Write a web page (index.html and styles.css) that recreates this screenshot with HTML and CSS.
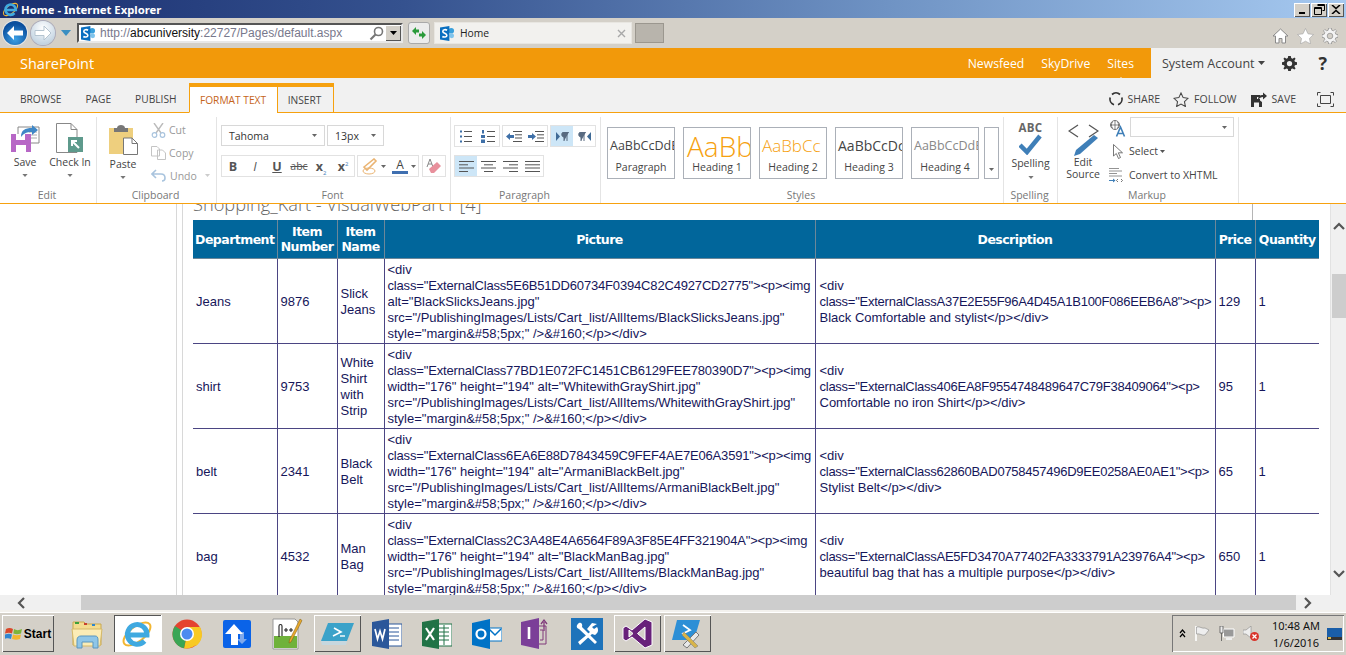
FILE: index.html
```html
<!DOCTYPE html>
<html lang="en">
<head>
<meta charset="utf-8">
<title>Home - Internet Explorer</title>
<link rel="stylesheet" href="styles.css">
</head>
<body>
<svg class="defs" width="0" height="0" aria-hidden="true">
  <symbol id="ie" viewBox="0 0 32 32">
    <ellipse cx="16" cy="16" rx="16" ry="7.5" transform="rotate(-38 16 16)" fill="none" stroke="#f2b632" stroke-width="2"/>
    <path d="M6.5 17H26A9.8 9.8 0 1 0 23.5 23" fill="none" stroke="#3fa9e0" stroke-width="5"/>
  </symbol>
  <symbol id="sp" viewBox="0 0 16 16">
    <circle cx="12" cy="5" r="3" fill="#39a0dc"/><circle cx="12.500" cy="10.500" r="2.500" fill="#7fc4ec"/>
    <path d="M0 1.500 10 0V16L0 14.500Z" fill="#0a6fc0"/>
    <path d="M7.500 4.500C6 3.500 3 3.700 3 5.800 3 8 7.300 7.600 7.300 10 7.300 12 4 12.200 2.500 11.200" fill="none" stroke="#fff" stroke-width="1.700"/>
  </symbol>
  <symbol id="caret" viewBox="0 0 7 4"><path d="M0 0H7L3.500 4Z" fill="#777"/></symbol>
  <symbol id="gear" viewBox="0 0 16 16">
    <path d="M6.600 0H9.400L9.800 2.200 11.300 2.800 13.200 1.500 14.500 2.800 13.200 4.700 13.800 6.200 16 6.600V9.400L13.800 9.800 13.200 11.300 14.500 13.200 13.200 14.500 11.300 13.200 9.800 13.800 9.400 16H6.600L6.200 13.800 4.700 13.200 2.800 14.500 1.500 13.200 2.800 11.300 2.200 9.800 0 9.400V6.600L2.200 6.200 2.800 4.700 1.500 2.800 2.800 1.500 4.700 2.800 6.200 2.200Z"/>
    <circle cx="8" cy="8" r="2.800" fill="var(--hole,#f1f1f1)"/>
  </symbol>
</svg>

<header class="titlebar">
  <svg class="ti-logo"><use href="#ie"/></svg>
  <span class="ti-text">Home - Internet Explorer</span>
  <div class="win-btns">
    <span class="win-btn"><svg width="9" height="9" viewBox="0 0 9 9"><path d="M1 7h6v2H1z"/></svg></span>
    <span class="win-btn"><svg width="11" height="11" viewBox="0 0 11 11"><path d="M3.500.5h7v6h-2M.5 3.500h7v7h-7zM.5 4.500h7M3.500 1.500h7" fill="none" stroke="#000"/></svg></span>
    <span class="win-btn win-close"><svg width="10" height="9" viewBox="0 0 10 9"><path d="M1 0 5 3.500 9 0M1 9 5 5.500 9 9" fill="none" stroke="#000" stroke-width="1.600"/></svg></span>
  </div>
</header>

<nav class="toolbar">
  <span class="nav-round nav-back"><svg width="18" height="16" viewBox="0 0 18 16"><path d="M8 1 1 8l7 7V10.500h9v-5H8Z" fill="#fff"/></svg></span>
  <span class="nav-round nav-fwd"><svg width="18" height="16" viewBox="0 0 18 16"><path d="M10 1l7 7-7 7V10.500H1v-5h9Z" fill="#fff" stroke="#b5c4d0"/></svg></span>
  <svg class="nav-menu" width="10" height="6" viewBox="0 0 10 6"><path d="M0 0H10L5 6Z" fill="#3a8fc2"/></svg>
  <div class="addr">
    <svg class="addr-sp"><use href="#sp"/></svg>
    <span class="addr-url"><span class="dim">http://</span>abcuniversity<span class="dim">:22727/Pages/default.aspx</span></span>
    <svg class="addr-search" width="15" height="15" viewBox="0 0 15 15"><circle cx="9.500" cy="5.500" r="4" fill="none" stroke="#777" stroke-width="1.600"/><path d="M6.500 8.500 1.500 13.500" stroke="#777" stroke-width="2.200"/></svg>
    <span class="addr-drop"><svg width="7" height="4"><path d="M0 0H7L3.500 4Z"/></svg></span>
  </div>
  <span class="refresh"><svg width="16" height="14" viewBox="0 0 16 14"><path d="M1 5 5 1V3.500H8V6.500H5V9ZM15 9l-4 4V10.500H8v-3h3V5Z" fill="#2a9a3a"/></svg></span>
  <div class="browser-tab">
    <svg class="tab-sp"><use href="#sp"/></svg>
    <span class="tab-title">Home</span>
    <svg class="tab-x" width="9" height="9" viewBox="0 0 9 9"><path d="M1 1l7 7M8 1 1 8" stroke="#a8a8a8" stroke-width="1.400"/></svg>
  </div>
  <span class="new-tab"></span>
  <div class="tool-icons">
    <svg width="17" height="16" viewBox="0 0 17 16"><path d="M8.500 1 1 8h2.500v7H7v-4.500h3V15h3.500V8H16Z" fill="#fff" stroke="#8a8a8a"/></svg>
    <svg width="17" height="16" viewBox="0 0 17 16"><path d="M8.500.5 11 5.800l5.500.7-4 3.900 1 5.500-5-2.700-5 2.700 1-5.500-4-3.900L6 5.800Z" fill="#fff" stroke="#a0a0a0" stroke-width=".6"/></svg>
    <svg class="tool-gear" width="16" height="16"><use href="#gear"/></svg>
  </div>
</nav>

<div class="suitebar">
  <div class="suite-left">
    <span class="suite-brand">SharePoint</span>
    <div class="suite-links">
      <a class="suite-link">Newsfeed</a>
      <a class="suite-link">SkyDrive</a>
      <a class="suite-link suite-current">Sites</a>
    </div>
  </div>
  <div class="suite-right">
    <span class="account">System Account</span>
    <svg class="account-caret" width="7" height="4"><path d="M0 0H7L3.500 4Z" fill="#444"/></svg>
    <svg class="suite-gear" width="15" height="15" viewBox="0 0 16 16"><use href="#gear"/></svg>
    <span class="help">?</span>
  </div>
</div>

<div class="tabs">
  <a class="tab">BROWSE</a>
  <a class="tab">PAGE</a>
  <a class="tab">PUBLISH</a>
  <a class="tab tab-on tab-format">FORMAT TEXT</a>
  <a class="tab tab-on tab-insert">INSERT</a>
  <div class="tab-actions">
    <span class="action action-share"><svg width="14" height="14" viewBox="0 0 14 14"><path d="M3 2.500A6 6 0 0 1 11 2.500M12.800 5.500A6 6 0 0 1 9 12.700M5 12.700A6 6 0 0 1 1.200 5.500" fill="none" stroke="#333" stroke-width="1.700"/></svg>SHARE</span>
    <span class="action action-follow"><svg width="16" height="15" viewBox="0 0 17 16"><path d="M8.500 1 10.800 6l5.200.7-3.800 3.600 1 5.200-4.700-2.600-4.700 2.600 1-5.200L1 6.700 6.200 6Z" fill="none" stroke="#444" stroke-width="1.100"/></svg>FOLLOW</span>
    <span class="action action-save"><svg width="16" height="15" viewBox="0 0 16 15"><path d="M0 3H9V5H6V7H9V8.500L11 10V15H0Z" fill="#333"/><path d="M3 10.500H8V15H3Z" fill="#f1f1f1"/><path d="M7 8C7 4 9 3 12 3V0.500L16 4 12 7.500V5C10 5 8.500 6 7 8Z" fill="#333"/></svg>SAVE</span>
    <svg class="focus-icon" width="17" height="15" viewBox="0 0 17 15"><path d="M.5 3.500V.5H3.500M13.500.5H16.500V3.500M16.500 11.500V14.500H13.500M3.500 14.500H.5V11.500" fill="none" stroke="#444"/><path d="M3.500 3.500H13.500V11.500H3.500Z" fill="none" stroke="#444"/></svg>
  </div>
</div>

<section class="ribbon">
  <div class="grp grp-edit">
    <div class="grp-body">
      <div class="big big-save">
        <svg width="29" height="28" viewBox="0 0 29 28"><path d="M7 3H28V19H7Z" fill="#fff" stroke="#888"/><path d="M18 8H26M18 11H26M18 14H26" stroke="#aaa"/><path d="M0 10H20V28H0Z" fill="#b767c6"/><path d="M5 10H14V16H5ZM5 21H15V28H5Z" fill="#fff"/><path d="M10 13C10 6 14 4 21 4V1L27 6 21 11V8C16 8 13 9 10 13Z" fill="#3f87c6"/></svg>
        <span class="big-text">Save</span>
        <svg class="big-caret"><use href="#caret"/></svg>
      </div>
      <div class="big big-check">
        <svg width="28" height="30" viewBox="0 0 28 30"><path d="M.5.5H15L21 6.500V29.500H.5Z" fill="#fff" stroke="#888"/><path d="M15 .5V6.500H21" fill="none" stroke="#888"/><path d="M12 14H27V29H12Z" fill="#5e9a8c"/><path d="M23 25 17 19M16 23V18H21" fill="none" stroke="#fff" stroke-width="2"/></svg>
        <span class="big-text">Check In</span>
        <svg class="big-caret"><use href="#caret"/></svg>
      </div>
    </div>
    <div class="grp-label">Edit</div>
  </div>

  <div class="grp grp-clip">
    <div class="grp-body">
      <div class="big big-paste">
        <svg width="29" height="31" viewBox="0 0 29 31"><path d="M0 4H24V30H0Z" fill="#eecf7e"/><path d="M5 4H8C8 0 16 0 16 4H19V8H5Z" fill="#777"/><path d="M14.500 14H23L28.500 19.500V30.500H14.500Z" fill="#fff" stroke="#777"/><path d="M23 14V19.500H28.500" fill="none" stroke="#777"/></svg>
        <span class="big-text">Paste</span>
        <svg class="big-caret"><use href="#caret"/></svg>
      </div>
      <div class="smalls">
        <div class="small"><svg width="15" height="15" viewBox="0 0 15 15"><path d="M3 0 10 10M12 0 5 10" stroke="#bbb" stroke-width="1.400"/><circle cx="3.500" cy="12" r="2.300" fill="none" stroke="#a9c4de" stroke-width="1.200"/><circle cx="11.500" cy="12" r="2.300" fill="none" stroke="#a9c4de" stroke-width="1.200"/></svg><span>Cut</span></div>
        <div class="small"><svg width="15" height="14" viewBox="0 0 15 14"><path d="M.5.5H6L8.500 3V10H.5ZM6.500 4H11.500L14.500 7V13.500H6.500Z" fill="#fff" stroke="#c4c4c4"/></svg><span>Copy</span></div>
        <div class="small small-undo"><svg width="15" height="13" viewBox="0 0 15 13"><path d="M5 1 1 5 5 9M1 5H10C13 5 14 7 14 9S13 12 11 12" fill="none" stroke="#a9c4de" stroke-width="1.600"/></svg><span>Undo</span><svg class="undo-caret" width="5" height="3"><path d="M0 0H5L2.500 3Z" fill="#ccc"/></svg></div>
      </div>
    </div>
    <div class="grp-label">Clipboard</div>
  </div>

  <div class="grp grp-font">
    <div class="grp-body grp-col">
      <div class="ctl-row">
        <div class="select sel-font"><span>Tahoma</span><svg width="5" height="3"><path d="M0 0H5L2.500 3Z" fill="#666"/></svg></div>
        <div class="select sel-size"><span>13px</span><svg width="5" height="3"><path d="M0 0H5L2.500 3Z" fill="#666"/></svg></div>
      </div>
      <div class="ctl-row ctl-row2">
        <div class="btnbox box-fmt">
          <b class="fmt">B</b><i class="fmt fmt-i">I</i><u class="fmt">U</u><s class="fmt fmt-abc">abc</s><b class="fmt fmt-x">x<sub>2</sub></b><b class="fmt fmt-x">x<sup>2</sup></b>
        </div>
        <div class="btnbox box-color">
          <svg width="16" height="17" viewBox="0 0 16 17"><path d="M2 9 12 1 14 3 5 12Z" fill="none" stroke="#eab473" stroke-width="1.600"/><ellipse cx="7" cy="13" rx="6" ry="3" fill="none" stroke="#eab473"/></svg>
          <svg class="mini-caret" width="5" height="3"><path d="M0 0H5L2.500 3Z" fill="#666"/></svg>
          <span class="font-a">A</span>
          <svg class="mini-caret" width="5" height="3"><path d="M0 0H5L2.500 3Z" fill="#666"/></svg>
        </div>
        <div class="btnbox box-erase">
          <svg width="16" height="16" viewBox="0 0 16 16"><path d="M1 9 4 1 7 9M2 6H6" fill="none" stroke="#888"/><path d="M3 11 11 4 15 8 8 15H5Z" fill="#e8909c"/></svg>
        </div>
      </div>
    </div>
    <div class="grp-label">Font</div>
  </div>

  <div class="grp grp-para">
    <div class="grp-body grp-col">
      <div class="ctl-row para-row">
        <div class="btnbox pbox">
          <span class="pcell"><svg width="12" height="13" viewBox="0 0 12 13"><path d="M4 1.500H12M4 6.500H12M4 11.500H12" stroke="#555"/><path d="M0 .5H2V2.500H0ZM0 5.500H2V7.500H0ZM0 10.500H2V12.500H0Z" fill="#3f70a8"/></svg></span>
          <span class="pcell"><svg width="14" height="13" viewBox="0 0 14 13"><path d="M6 1.500H14M6 6.500H14M6 11.500H14" stroke="#555"/><path d="M1 0H3V3.500H1ZM0 5H4V8H0ZM0 9.500H4V13H0Z" fill="#3f70a8"/></svg></span>
        </div>
        <div class="btnbox pbox">
          <span class="pcell"><svg width="16" height="11" viewBox="0 0 16 11"><path d="M7 .5H16M9 3.800H16M9 7H16M7 10.500H16" stroke="#555"/><path d="M0 5.500 4 2V4H8V7H4V9Z" fill="#3f70a8"/></svg></span>
          <span class="pcell"><svg width="16" height="11" viewBox="0 0 16 11"><path d="M7 .5H16M9 3.800H16M9 7H16M7 10.500H16" stroke="#555"/><path d="M8 5.500 4 2V4H0V7H4V9Z" fill="#3f70a8"/></svg></span>
        </div>
        <div class="btnbox pbox">
          <span class="pcell pcell-on"><svg width="13" height="9" viewBox="0 0 13 9"><path d="M0 0 4 4.500 0 9Z" fill="#3f6a96"/><path d="M8 9V0H13M11 0V9M8 0C5 0 5 5 8 5" fill="#596b80" stroke="#596b80"/></svg></span>
          <span class="pcell"><svg width="13" height="9" viewBox="0 0 13 9"><path d="M13 0 9 4.500 13 9Z" fill="#3f6a96"/><path d="M3 9V0H8M6 0V9M3 0C0 0 0 5 3 5" fill="#596b80" stroke="#596b80"/></svg></span>
        </div>
      </div>
      <div class="ctl-row ctl-row2 para-row">
        <div class="btnbox abox">
          <span class="pcell pcell-on"><svg width="15" height="11" viewBox="0 0 15 11"><path d="M0 .5H15M0 3.800H9M0 7H15M0 10.500H9" stroke="#555"/></svg></span>
          <span class="pcell"><svg width="15" height="11" viewBox="0 0 15 11"><path d="M0 .5H15M3 3.800H12M0 7H15M3 10.500H12" stroke="#555"/></svg></span>
          <span class="pcell"><svg width="15" height="11" viewBox="0 0 15 11"><path d="M0 .5H15M6 3.800H15M0 7H15M6 10.500H15" stroke="#555"/></svg></span>
          <span class="pcell"><svg width="15" height="11" viewBox="0 0 15 11"><path d="M0 .5H15M0 3.800H15M0 7H15M0 10.500H15" stroke="#555"/></svg></span>
        </div>
      </div>
    </div>
    <div class="grp-label">Paragraph</div>
  </div>

  <div class="grp grp-styles">
    <div class="grp-body styles-body">
      <div class="style-card"><span class="prev prev-p">AaBbCcDdE</span><span class="cap">Paragraph</span></div>
      <div class="style-card"><span class="prev prev-h1">AaBb</span><span class="cap">Heading 1</span></div>
      <div class="style-card"><span class="prev prev-h2">AaBbCc</span><span class="cap">Heading 2</span></div>
      <div class="style-card"><span class="prev prev-h3">AaBbCcDc</span><span class="cap">Heading 3</span></div>
      <div class="style-card"><span class="prev prev-h4">AaBbCcDdE</span><span class="cap">Heading 4</span></div>
      <div class="style-more"><svg width="5" height="3"><path d="M0 0H5L2.500 3Z" fill="#666"/></svg></div>
    </div>
    <div class="grp-label">Styles</div>
  </div>

  <div class="grp grp-spell">
    <div class="grp-body">
      <div class="big big-spell">
        <span class="abc">ABC</span>
        <svg width="23" height="21" viewBox="0 0 23 21"><path d="M1 11 8 18 21 2" fill="none" stroke="#3f7fb8" stroke-width="4.500"/></svg>
        <span class="big-text spell-text">Spelling</span>
        <svg class="big-caret"><use href="#caret"/></svg>
      </div>
    </div>
    <div class="grp-label">Spelling</div>
  </div>

  <div class="grp grp-markup">
    <div class="grp-body">
      <div class="big big-source">
        <svg width="31" height="32" viewBox="0 0 31 32"><path d="M10 1 1 7l9 6M21 1l9 6-9 6" fill="none" stroke="#555" stroke-width="1.300"/><path d="M26 11 30 14 12 30 6 32 8 26Z" fill="#3f7fb8"/></svg>
        <span class="big-text src-text">Edit<br>Source</span>
      </div>
      <div class="markup-col">
        <div class="lang-row">
          <svg width="17" height="17" viewBox="0 0 17 17"><circle cx="6" cy="5" r="4.500" fill="none" stroke="#555" stroke-width=".8"/><path d="M1.500 5H10.500M6 .5V9.500M3.500 2C2 4 2 6 3.500 8M8.500 2C10 4 10 6 8.500 8" fill="none" stroke="#555" stroke-width=".7"/><path d="M7.500 16.500 11.500 7 15.500 16.500M9 13.500H14" fill="none" stroke="#3f7fb8" stroke-width="1.600"/></svg>
          <div class="lang-select"><svg width="5" height="3"><path d="M0 0H5L2.500 3Z" fill="#666"/></svg></div>
        </div>
        <div class="mk-row mk-select">
          <svg width="10" height="15" viewBox="0 0 10 15"><path d="M.5.5V12L3.300 9.500 5.500 14.500 7.500 13.500 5.300 8.800H9.500Z" fill="#fff" stroke="#555" stroke-width=".8"/></svg>
          <span>Select</span><svg class="mini-caret" width="5" height="3"><path d="M0 0H5L2.500 3Z" fill="#555"/></svg>
        </div>
        <div class="mk-row mk-convert">
          <svg width="15" height="15" viewBox="0 0 15 15"><path d="M0 .5H10M0 3H13M0 5.500H8M0 8H13" stroke="#777" stroke-width=".8"/><path d="M0 10V12H4V10.500L6.500 12.500 4 14.500V13H0" fill="#3f7fb8"/><path d="M9 11 7.500 12.500 9 14M12 11 13.500 12.500 12 14" fill="none" stroke="#555" stroke-width=".8"/></svg>
          <span>Convert to XHTML</span>
        </div>
      </div>
    </div>
    <div class="grp-label">Markup</div>
  </div>
</section>

<main class="page">
  <aside class="leftnav"></aside>
  <div class="content">
    <div class="wp-head">
      <h2 class="wp-title">Shopping_Kart - VisualWebPart1 [4]</h2>
      <span class="wp-tick"></span>
    </div>
    <table class="grid">
      <colgroup>
        <col class="c-dept"><col class="c-num"><col class="c-name"><col class="c-pic"><col class="c-desc"><col class="c-price"><col class="c-qty">
      </colgroup>
      <thead>
        <tr><th>Department</th><th>Item<br>Number</th><th>Item<br>Name</th><th>Picture</th><th>Description</th><th>Price</th><th>Quantity</th></tr>
      </thead>
      <tbody>
        <tr>
          <td>Jeans</td><td>9876</td><td>Slick<br>Jeans</td>
          <td>&lt;div<br><span class="cl">class="ExternalClass5E6B51DD60734F0394C82C4927CD2775"&gt;&lt;p&gt;&lt;img</span><br>alt="BlackSlicksJeans.jpg"<br>src="/PublishingImages/Lists/Cart_list/AllItems/BlackSlicksJeans.jpg"<br>style="margin&amp;#58;5px;" /&gt;&amp;#160;&lt;/p&gt;&lt;/div&gt;</td>
          <td>&lt;div<br><span class="cl">class="ExternalClassA37E2E55F96A4D45A1B100F086EEB6A8"&gt;&lt;p&gt;</span><br>Black Comfortable and stylist&lt;/p&gt;&lt;/div&gt;</td>
          <td>129</td><td>1</td>
        </tr>
        <tr>
          <td>shirt</td><td>9753</td><td>White<br>Shirt<br>with<br>Strip</td>
          <td>&lt;div<br><span class="cl">class="ExternalClass77BD1E072FC1451CB6129FEE780390D7"&gt;&lt;p&gt;&lt;img</span><br>width="176" height="194" alt="WhitewithGrayShirt.jpg"<br>src="/PublishingImages/Lists/Cart_list/AllItems/WhitewithGrayShirt.jpg"<br>style="margin&amp;#58;5px;" /&gt;&amp;#160;&lt;/p&gt;&lt;/div&gt;</td>
          <td>&lt;div<br><span class="cl">class="ExternalClass406EA8F9554748489647C79F38409064"&gt;&lt;p&gt;</span><br>Comfortable no iron Shirt&lt;/p&gt;&lt;/div&gt;</td>
          <td>95</td><td>1</td>
        </tr>
        <tr>
          <td>belt</td><td>2341</td><td>Black<br>Belt</td>
          <td>&lt;div<br><span class="cl">class="ExternalClass6EA6E88D7843459C9FEF4AE7E06A3591"&gt;&lt;p&gt;&lt;img</span><br>width="176" height="194" alt="ArmaniBlackBelt.jpg"<br>src="/PublishingImages/Lists/Cart_list/AllItems/ArmaniBlackBelt.jpg"<br>style="margin&amp;#58;5px;" /&gt;&amp;#160;&lt;/p&gt;&lt;/div&gt;</td>
          <td>&lt;div<br><span class="cl">class="ExternalClass62860BAD0758457496D9EE0258AE0AE1"&gt;&lt;p&gt;</span><br>Stylist Belt&lt;/p&gt;&lt;/div&gt;</td>
          <td>65</td><td>1</td>
        </tr>
        <tr>
          <td>bag</td><td>4532</td><td>Man<br>Bag</td>
          <td>&lt;div<br><span class="cl">class="ExternalClass2C3A48E4A6564F89A3F85E4FF321904A"&gt;&lt;p&gt;&lt;img</span><br>width="176" height="194" alt="BlackManBag.jpg"<br>src="/PublishingImages/Lists/Cart_list/AllItems/BlackManBag.jpg"<br>style="margin&amp;#58;5px;" /&gt;&amp;#160;&lt;/p&gt;&lt;/div&gt;</td>
          <td>&lt;div<br><span class="cl">class="ExternalClassAE5FD3470A77402FA3333791A23976A4"&gt;&lt;p&gt;</span><br>beautiful bag that has a multiple purpose&lt;/p&gt;&lt;/div&gt;</td>
          <td>650</td><td>1</td>
        </tr>
      </tbody>
    </table>
  </div>
  <div class="vscroll">
    <svg class="chev-up" width="12" height="8" viewBox="0 0 12 8"><path d="M1 7 6 2 11 7" fill="none" stroke="#555" stroke-width="2.200"/></svg>
    <span class="vthumb"></span>
    <svg class="chev-down" width="12" height="8" viewBox="0 0 12 8"><path d="M1 1 6 6 11 1" fill="none" stroke="#555" stroke-width="2.200"/></svg>
  </div>
</main>

<div class="hscroll">
  <svg class="chev-left" width="8" height="12" viewBox="0 0 8 12"><path d="M7 1 2 6 7 11" fill="none" stroke="#555" stroke-width="2.200"/></svg>
  <span class="hthumb"></span>
  <svg class="chev-right" width="8" height="12" viewBox="0 0 8 12"><path d="M1 1 6 6 1 11" fill="none" stroke="#555" stroke-width="2.200"/></svg>
</div>

<footer class="taskbar">
  <div class="start">
    <svg width="18" height="16" viewBox="0 0 18 16"><path d="M1 3C3 1.500 6 1.500 8 3L7 7.500C5 6.500 3 6.500 0 7.500Z" fill="#d9482b"/><path d="M9 3C11 4.500 14 4.500 17 3L16 7.500C13 8.500 11 8.500 8.300 7.500Z" fill="#7db53a"/><path d="M0 8.500C3 7.500 5 7.500 7 8.500L6 13C4 12 2 12 -1 13Z" fill="#2f86d1"/><path d="M8 8.500C10.500 9.500 13 9.500 16 8.500L15 13C12 14 10 14 7 13Z" fill="#f3b62f"/></svg>
    <span>Start</span>
  </div>
  <div class="apps">
    <span class="app"><svg width="32" height="30" viewBox="0 0 32 30"><path d="M2 3H13L15 5H30V26H2Z" fill="#f3dc8f" stroke="#c9a84e"/><path d="M4 3H8V5H4Z" fill="#3da03a"/><path d="M13 4H16V6H13Z" fill="#c8402e"/><path d="M21 5H24V7H21Z" fill="#2f86d1"/><path d="M1 10H31L29 27H3Z" fill="#fbecb6" stroke="#d5b968"/><path d="M6 29V21C6 18 8 17 10 17H24C26 17 27 18 27 21V29H22V23H11V29Z" fill="#8fc6e8" stroke="#5a96bf"/></svg></span>
    <span class="app app-on"><svg width="32" height="32"><use href="#ie"/></svg></span>
    <span class="app"><svg width="30" height="30" viewBox="0 0 30 30"><circle cx="15" cy="15" r="14.500" fill="#e5432f"/><path d="M15 15 27 22A14.500 14.500 0 0 1 12 29.300Z" fill="#f8c922"/><path d="M15 15 12 29.300A14.500 14.500 0 0 1 3 7Z" fill="#3aa655"/><path d="M15 8H28A14.500 14.500 0 0 1 24 27L15 15Z" fill="#f8c922"/><circle cx="15" cy="15" r="7" fill="#fff"/><circle cx="15" cy="15" r="5.500" fill="#4c8bf0"/></svg></span>
    <span class="app"><svg width="28" height="28" viewBox="0 0 28 28"><rect width="28" height="28" rx="2" fill="#0a63e8"/><path d="M17 12H21V19H24L19 24 14 19H17Z" fill="#7fa9ec"/><path d="M11 4 20 14H15V25H8V14H2Z" fill="#fff"/></svg></span>
    <span class="app"><svg width="31" height="32" viewBox="0 0 31 32"><path d="M1 1H23L26 4V31H1Z" fill="#fff" stroke="#999"/><path d="M2 18H25V30H2Z" fill="#6fb23a"/><path d="M7 19V8C7 6 10 6 10 8V18M12 12H16M14 10V14M17 12H21M19 10V14" fill="none" stroke="#222" stroke-width="1.100"/><path d="M28 1 30 2.500 19 24 17 25 17.500 22Z" fill="#e8a92d" stroke="#7a5a12" stroke-width=".5"/></svg></span>
    <span class="app app-btn"><svg width="33" height="24" viewBox="0 0 33 24"><path d="M7 1H33L26 19H0Z" fill="#3ba2c9"/><path d="M0 19H26L25 23H1Z" fill="#c7d7de"/><path d="M13 6 20 10 12 14" fill="none" stroke="#fff" stroke-width="1.600"/><path d="M19 14H24" stroke="#fff" stroke-width="1.400"/></svg></span>
    <span class="app"><svg width="30" height="30" viewBox="0 0 30 30"><path d="M13 5H30V27H13Z" fill="#fff" stroke="#2b579a"/><path d="M16 9H27M16 13H27M16 17H27M16 21H27" stroke="#2b579a"/><path d="M0 3 17 0V30L0 27Z" fill="#2b579a"/><path d="M3 10 5.500 20 8 12 10.500 20 13 10" fill="none" stroke="#fff" stroke-width="1.700"/></svg></span>
    <span class="app"><svg width="30" height="30" viewBox="0 0 30 30"><path d="M13 5H30V27H13Z" fill="#fff" stroke="#217346"/><path d="M17 9H27M17 13H27M17 17H27M17 21H27M22 6V26" stroke="#217346"/><path d="M0 3 17 0V30L0 27Z" fill="#217346"/><path d="M4 9 12 21M12 9 4 21" stroke="#fff" stroke-width="2.200"/></svg></span>
    <span class="app"><svg width="30" height="30" viewBox="0 0 30 30"><path d="M16 9H30V22H16Z" fill="#fff" stroke="#0072c6"/><path d="M17 10 23 16 29 10" fill="none" stroke="#0072c6" stroke-width="1.500"/><path d="M0 4 18 0V30L0 26Z" fill="#0072c6"/><circle cx="9" cy="15" r="4.500" fill="none" stroke="#fff" stroke-width="2.200"/></svg></span>
    <span class="app"><svg width="32" height="31" viewBox="0 0 32 31"><path d="M16 8H25V26H16" fill="none" stroke="#80397b"/><path d="M23 13V4M20 6 23 2 26 6" fill="none" stroke="#80397b" stroke-width="1.300"/><path d="M19 12H22V22H19" fill="none" stroke="#80397b"/><path d="M0 4 18 0V31L0 27Z" fill="#7b3f98"/><path d="M8 9V21" stroke="#fff" stroke-width="2.600"/></svg></span>
    <span class="app"><svg width="32" height="32" viewBox="0 0 32 32"><rect width="32" height="32" fill="#1e73ba"/><path d="M8 5 C5 7 5 10 8 11L24 26 26 24 11 9C12 6 10 4 8 5ZM26 6 21 5 16 11 19 14 7 24 9 27 21 16 24 17C27 15 28 12 26 9L23 11 21 9Z" fill="#fff"/></svg></span>
    <span class="app app-btn"><svg width="31" height="31" viewBox="0 0 31 31"><path d="M23 1 30 4V27L23 30 10 19 4 23 1 21V10L4 8 10 12ZM7 12V19L11 15.500ZM23 9 15.500 15.500 23 22Z" fill="#68217a" stroke="#fff" stroke-width="1"/></svg></span>
    <span class="app app-btn"><svg width="31" height="30" viewBox="0 0 31 30"><path d="M5 1H28L22 21H0Z" fill="#2d8fd6"/><path d="M11 6 18 11 10 15" fill="none" stroke="#fff" stroke-width="1.800"/><path d="M11 26 24 13 27 16 15 29Z" fill="#e8e8e8" stroke="#777"/><path d="M12 13 26 27 23 29 10 16Z" fill="#d8b449" stroke="#777" stroke-width=".5"/></svg></span>
  </div>
  <div class="tray">
    <svg width="7" height="9" viewBox="0 0 7 9"><path d="M1 4 3.500 1 6 4M1 8 3.500 5 6 8" fill="none" stroke="#000" stroke-width="1.200"/></svg>
    <svg class="tray-flag" width="15" height="15" viewBox="0 0 15 15"><path d="M1 0V15" stroke="#fff" stroke-width="1.600"/><path d="M1.500 1C5 0 7 3 10 2L14 4 10 9C7 10 5 7 1.500 8Z" fill="#eee" stroke="#777" stroke-width=".5"/></svg>
    <svg class="tray-net" width="16" height="15" viewBox="0 0 16 15"><path d="M4.500 3H15V11H4.500Z" fill="#999" stroke="#fff"/><path d="M7 13H13" stroke="#eee" stroke-width="2"/><path d="M1 0H4V7H1ZM2.500 7V15" fill="#eee" stroke="#555" stroke-width=".8"/></svg>
    <svg class="tray-snd" width="16" height="15" viewBox="0 0 16 15"><path d="M0 4H3L8 0V12L3 8H0Z" fill="#eee" stroke="#888" stroke-width=".6"/><circle cx="11.500" cy="10.500" r="4.500" fill="#d8342b"/><path d="M9.500 8.500 13.500 12.500M13.500 8.500 9.500 12.500" stroke="#fff" stroke-width="1.300"/></svg>
    <div class="clock"><span>10:48 AM</span><span>1/6/2016</span></div>
    <svg class="tray-desk" width="15" height="12" viewBox="0 0 15 12"><rect width="15" height="12" fill="#1a5ea8"/><path d="M0 9H15V12H0Z" fill="#333"/><rect x="1" y="9" width="3" height="2" fill="#d8b449"/></svg>
  </div>
</footer>
</body>
</html>
```

FILE: styles.css
```css
* { box-sizing: border-box; }

html, body { margin: 0; padding: 0; height: 655px; overflow: hidden; }

body {
  width: 1346px;
  display: flex;
  flex-direction: column;
  font-family: "Open Sans", "Liberation Sans", sans-serif;
  font-size: 12px;
  color: #444;
  background: #fff;
}

svg { display: block; flex: none; }
.defs { position: absolute; }

/* title bar */
.titlebar {
  height: 18px;
  display: flex;
  align-items: center;
  padding: 0 2px;
  background: linear-gradient(90deg, #1a2f70 0%, #35528f 30%, #6f93c4 66%, #a6c9f0 100%);
}
.ti-logo { width: 17px; height: 17px; }
.ti-text {
  margin-left: 2px;
  font: 700 11.300px "Noto Sans", sans-serif;
  color: #fff;
}
.win-btns { margin-left: auto; display: flex; gap: 1px; padding-top: 1px; }
.win-btn {
  width: 16px;
  height: 14px;
  display: flex;
  align-items: center;
  justify-content: center;
  background: #d4d0c8;
  box-shadow: inset 1px 1px 0 #fff, inset -1px -1px 0 #555;
}

/* browser toolbar */
.toolbar {
  height: 30px;
  display: flex;
  align-items: center;
  background: #d4d0c8;
  padding-left: 3px;
}
.nav-round {
  width: 24px;
  height: 24px;
  border-radius: 50%;
  display: flex;
  align-items: center;
  justify-content: center;
}
.nav-back {
  background: radial-gradient(circle at 50% 75%, #3da1e6, #0a4f9e 70%);
  box-shadow: 0 0 0 1px #e8e8e8;
}
.nav-fwd {
  margin-left: 4px;
  background: radial-gradient(circle at 50% 30%, #fff, #c3d4e2 75%);
  box-shadow: 0 0 0 1px #aab;
}
.nav-menu { margin-left: 6px; }
.addr {
  margin-left: 6px;
  width: 326px;
  height: 20px;
  display: flex;
  align-items: center;
  background: #fff;
  border: 2px solid #555;
  border-right-color: #e8e8e8;
  border-bottom-color: #e8e8e8;
  padding-left: 2px;
}
.addr-sp { width: 15px; height: 15px; }
.addr-url {
  margin-left: 4px;
  font: 12px "Liberation Sans", sans-serif;
  color: #111;
  white-space: nowrap;
}
.dim { color: #78788c; }
.addr-search { margin-left: auto; margin-right: 1px; }
.addr-drop {
  width: 16px;
  height: 16px;
  display: flex;
  align-items: center;
  justify-content: center;
  background: #d4d0c8;
  box-shadow: inset 1px 1px 0 #fff, inset -1px -1px 0 #555;
}
.refresh {
  margin-left: 5px;
  width: 22px;
  height: 22px;
  display: flex;
  align-items: center;
  justify-content: center;
  background: #ececec;
  border: 1px solid #a9a9a9;
  border-radius: 3px;
}
.browser-tab {
  margin-left: 5px;
  width: 196px;
  height: 20px;
  display: flex;
  align-items: center;
  padding-left: 5px;
  background: #f2f1ee;
  box-shadow: 0 0 0 1px #e8e6e1;
}
.tab-sp { width: 15px; height: 15px; }
.tab-title { margin-left: 5px; font: 10.300px "Open Sans", sans-serif; color: #222; }
.tab-x { margin-left: auto; margin-right: 5px; }
.new-tab {
  margin-left: 4px;
  width: 29px;
  height: 20px;
  background: #b8b4ac;
  border: 1px solid #9b978f;
}
.tool-icons {
  margin-left: auto;
  display: flex;
  align-items: center;
  gap: 8px;
  padding-right: 8px;
  padding-top: 5px;
}
.tool-gear { fill: #f4f4f4; stroke: #8a8a8a; stroke-width: .7; --hole: #d4d0c8; }

/* suite bar */
.suitebar { height: 30px; display: flex; }
.suite-left {
  width: 1151px;
  display: flex;
  align-items: center;
  padding-left: 20px;
  background: #f2990a;
  color: #fff;
}
.suite-brand { font-size: 14.500px; }
.suite-links { margin-left: auto; display: flex; gap: 17px; padding-right: 17px; font-size: 12.200px; }
.suite-link { position: relative; }
.suite-current::after {
  content: "";
  position: absolute;
  left: 50%;
  bottom: -8px;
  margin-left: -3px;
  border: 3px solid transparent;
  border-top: 0;
  border-bottom-color: #f1f1f1;
}
.suite-right {
  flex: 1;
  display: flex;
  align-items: center;
  padding-left: 11px;
  background: #f1f1f1;
  color: #444;
}
.account { font-size: 12.500px; }
.account-caret { margin-left: 3px; }
.suite-gear { margin-left: 17px; fill: #333; }
.help { margin-left: 22px; font: 700 18px "Open Sans", sans-serif; color: #333; }

/* ribbon tabs */
.tabs {
  height: 35px;
  display: flex;
  align-items: flex-end;
  background: #f1f1f1;
  border-bottom: 1px solid #f6a10f;
  padding-left: 20px;
}
.tab {
  height: 29px;
  padding-top: 9px;
  margin-right: 24px;
  font-size: 10.200px;
  color: #444;
}
.tab-on {
  margin: 0 0 -1px;
  height: 30px;
  border: 1px solid #f6a10f;
  border-top-width: 4px;
  padding-top: 6px;
  text-align: center;
}
.tab-format {
  width: 89px;
  margin-left: -12px;
  border-bottom-color: #fff;
  background: #fff;
  color: #c5651b;
}
.tab-insert { width: 57px; margin-left: -1px; border-left: 0; }
.tab-actions {
  margin-left: auto;
  align-self: center;
  display: flex;
  align-items: center;
  color: #444;
  font-size: 10.500px;
  padding-top: 8px;
  padding-right: 12px;
}
.action { display: flex; align-items: center; gap: 5px; }
.action-follow { margin-left: 13px; }
.action-save { margin-left: 14px; }
.focus-icon { margin-left: 21px; }

/* ribbon */
.ribbon {
  height: 91px;
  display: flex;
  padding-top: 4px;
  background: #fff;
  border-bottom: 1px solid #f6a10f;
}
.grp {
  display: flex;
  flex-direction: column;
  border-right: 1px solid #e4e4e4;
}
.grp-edit { width: 97px; }
.grp-clip { width: 120px; }
.grp-font { width: 234px; }
.grp-para { width: 150px; }
.grp-styles { width: 403px; }
.grp-spell { width: 54px; }
.grp-markup { width: 181px; }
.grp-body { height: 70px; display: flex; }
.grp-col { flex-direction: column; padding: 8px 0 0 4px; }
.grp-label {
  height: 16px;
  line-height: 16px;
  padding-right: 2px;
  text-align: center;
  font-size: 10.500px;
  color: #777;
}

.big { display: flex; flex-direction: column; align-items: center; }
.big-text { font-size: 10.500px; line-height: 12px; color: #444; text-align: center; }
.big-caret { width: 6px; height: 3px; margin-top: 6px; }

.big-save { width: 42px; margin-left: 4px; padding-top: 7px; }
.big-save .big-text { margin-top: 4px; }
.big-check { width: 48px; margin-left: 0; padding-top: 6px; }
.big-check .big-text { margin-top: 3px; }

.big-paste { width: 42px; margin-left: 5px; padding-top: 7px; }
.big-paste .big-text { margin-top: 3px; }
.smalls { margin-left: 7px; padding-top: 2px; display: flex; flex-direction: column; }
.small {
  height: 24px;
  display: flex;
  align-items: center;
  gap: 3px;
  font-size: 10.500px;
  color: #999;
}
.small-undo { gap: 4px; }
.undo-caret { margin-left: 4px; }

.ctl-row { display: flex; gap: 2px; height: 22px; }
.ctl-row2 { margin-top: 8px; height: 23px; }
.select {
  height: 21px;
  display: flex;
  align-items: center;
  justify-content: space-between;
  padding: 0 7px 0 7px;
  border: 1px solid #d8d8d8;
  font-size: 10.500px;
  color: #333;
}
.sel-font { width: 104px; }
.sel-size { width: 57px; }
.btnbox {
  display: flex;
  align-items: center;
  height: 22px;
  border: 1px solid #e2e2e2;
}
.box-fmt { width: 134px; }
.fmt {
  width: 22px;
  flex: none;
  text-align: center;
  font: 700 12.500px "Open Sans", sans-serif;
  color: #555;
  text-decoration: none;
}
.fmt-i { font-style: italic; font-weight: 400; }
u.fmt { text-decoration: underline; }
.fmt-abc { font-weight: 400; font-size: 10.500px; text-decoration: line-through; }
.fmt-x sub, .fmt-x sup { font-size: 6px; line-height: 0; font-weight: 400; color: #3f7fb8; }
.box-color { width: 62px; padding-left: 4px; margin-left: 0; }
.mini-caret { margin-left: 3px; }
.font-a {
  margin-left: 6px;
  width: 16px;
  text-align: center;
  font: 400 12px/13px "Open Sans", sans-serif;
  color: #444;
  border-bottom: 3px solid #3f6fb0;
}
.box-erase { width: 24px; margin-left: 1px; justify-content: center; }

.grp-para .grp-col { padding-left: 3px; }
.para-row .pbox { width: 46px; }
.pcell { flex: 1; height: 100%; display: flex; align-items: center; justify-content: center; }
.pcell-on { background: #cde6f7; }
.abox { width: 90px; }

.styles-body { padding: 10px 0 0 6px; gap: 8px; }
.style-card {
  width: 68px;
  height: 52px;
  display: flex;
  flex-direction: column;
  border: 1px solid #abb0b8;
  overflow: hidden;
}
.prev {
  height: 26px;
  margin-top: 5px;
  line-height: 26px;
  white-space: nowrap;
  padding-left: 2px;
}
.prev-p { font-size: 12.500px; color: #444; }
.prev-h1 { font-size: 28px; font-weight: 300; color: #f6a10f; padding-left: 3px; }
.prev-h2 { font-size: 17px; font-weight: 300; color: #f6a10f; }
.prev-h3 { font-size: 14px; color: #444; }
.prev-h4 { font-size: 12.500px; color: #888; }
.cap { text-align: center; font-size: 10.500px; line-height: 16px; color: #444; }
.style-more {
  width: 15px;
  height: 52px;
  margin-left: -3px;
  border: 1px solid #abb0b8;
  display: flex;
  align-items: flex-end;
  justify-content: center;
  padding-bottom: 7px;
}

.big-spell { width: 100%; padding-top: 4px; }
.abc { font: 700 11.500px/13px "Open Sans", sans-serif; color: #666; letter-spacing: .4px; }
.spell-text { margin-top: 2px; }
.big-spell .big-caret { margin-top: 7px; }

.big-source { width: 50px; margin-left: 0; padding-top: 7px; flex: none; }
.src-text { line-height: 12px; }
.markup-col { margin-left: 1px; padding-top: 0; display: flex; flex-direction: column; }
.lang-row { height: 20px; display: flex; align-items: flex-end; gap: 4px; }
.lang-select {
  width: 104px;
  height: 20px;
  border: 1px solid #d8d8d8;
  display: flex;
  align-items: center;
  justify-content: flex-end;
  padding-right: 6px;
}
.mk-row { display: flex; align-items: center; font-size: 10.500px; color: #444; }
.mk-select { height: 20px; margin-top: 4px; padding-left: 4px; gap: 6px; }
.mk-select .mini-caret { margin-left: -4px; }
.mk-convert { height: 20px; margin-top: 4px; gap: 5px; }

/* page */
.page { flex: 1; min-height: 0; display: flex; overflow: hidden; }
.leftnav {
  width: 183px;
  flex: none;
  border-right: 1px solid #d8d8d8;
  position: relative;
}
.leftnav::after {
  content: "";
  position: absolute;
  top: 0;
  bottom: 0;
  left: 176px;
  width: 1px;
  background: #d8d8d8;
}
.content { width: 1146px; flex: none; padding-left: 10px; overflow: hidden; }
.wp-head { height: 16px; display: flex; overflow: hidden; }
.wp-title {
  margin: -12px 0 0;
  font-size: 18.200px;
  font-weight: 300;
  line-height: 24px;
  color: #666;
  white-space: nowrap;
}
.wp-tick { margin-left: auto; margin-right: 76px; width: 1px; background: #b5b5b5; }

.grid {
  width: 1126px;
  table-layout: fixed;
  border-collapse: collapse;
  font: 13px/16px "Liberation Sans", sans-serif;
  color: #16165a;
}
.c-dept { width: 84px; }
.c-num { width: 60px; }
.c-name { width: 47px; }
.c-pic { width: 431px; }
.c-desc { width: 400px; }
.c-price { width: 40px; }
.c-qty { width: 64px; }
.grid th {
  height: 38px;
  padding: 1px 0 0;
  background: #01669b;
  border: 1px solid #6c8799;
  border-top: 0;
  color: #fff;
  font: 700 12.500px/15px "DejaVu Sans", sans-serif;
  letter-spacing: -.55px;
  text-align: center;
}
.grid th:first-child { border-left: 0; }
.grid th:last-child { border-right: 0; }
.grid td {
  height: 85px;
  padding: 2px 3px 0;
  border: 1px solid #4b4583;
  white-space: nowrap;
  vertical-align: middle;
}
.grid td:nth-child(4) .cl { letter-spacing: -.17px; }
.grid td:nth-child(5) { padding-left: 4px; }
.grid td:nth-child(5) .cl { letter-spacing: -.25px; }
.grid tbody tr:first-child td { border-top: 0; }
.grid td:first-child { border-left: 0; }
.grid td:last-child { border-right: 0; }

/* scrollbars */
.vscroll {
  flex: 1;
  display: flex;
  flex-direction: column;
  align-items: center;
  background: #f0f0f0;
  border-left: 1px solid #e2e2e2;
  margin-left: 1px;
  padding-top: 18px;
}
.vthumb { width: 14px; height: 44px; margin-top: 44px; background: #cdcdcd; }
.chev-down { margin-top: auto; margin-bottom: 17px; }
.hscroll {
  height: 15px;
  flex: none;
  display: flex;
  align-items: center;
  padding-left: 17px;
  background: #f0f0f0;
}
.hthumb { width: 1215px; height: 15px; margin-left: 56px; background: #cdcdcd; }
.chev-right { margin-left: 8px; }

/* taskbar */
.taskbar {
  height: 45px;
  flex: none;
  display: flex;
  align-items: flex-start;
  padding: 3px 2px 0;
  background: #d4d0c8;
  border-top: 2px solid #f3f1ed;
  box-shadow: inset 0 1px 0 #fff;
}
.start {
  width: 52px;
  height: 37px;
  display: flex;
  align-items: center;
  justify-content: center;
  gap: 1px;
  font: 700 12px "Liberation Sans", sans-serif;
  color: #000;
  box-shadow: inset 1px 1px 0 #fff, inset -1px -1px 0 #555;
}
.apps { margin-left: 8px; display: flex; }
.app {
  width: 50px;
  height: 37px;
  display: flex;
  align-items: center;
  justify-content: center;
}
.app-on { background: #fff; box-shadow: inset 1px 1px 0 #555, 1px 0 0 #fff; margin: 0 1.500px; width: 47px; }
.app-btn { margin: 0 1.500px; width: 47px; box-shadow: inset 1px 1px 0 #fff, inset -1px -1px 0 #555; }
.tray {
  margin-left: auto;
  width: 172px;
  height: 37px;
  display: flex;
  align-items: center;
  padding-left: 7px;
  box-shadow: inset 1px 1px 0 #777, inset -1px -1px 0 #fff;
}
.tray-flag { margin-left: 9px; }
.tray-net { margin-left: 9px; }
.tray-snd { margin-left: 8px; }
.clock {
  width: 60px;
  margin-left: 7px;
  display: flex;
  flex-direction: column;
  align-items: center;
  font: 11px/17px "Noto Sans", sans-serif;
  color: #111;
}
.tray-desk { margin-left: 1px; }
```
